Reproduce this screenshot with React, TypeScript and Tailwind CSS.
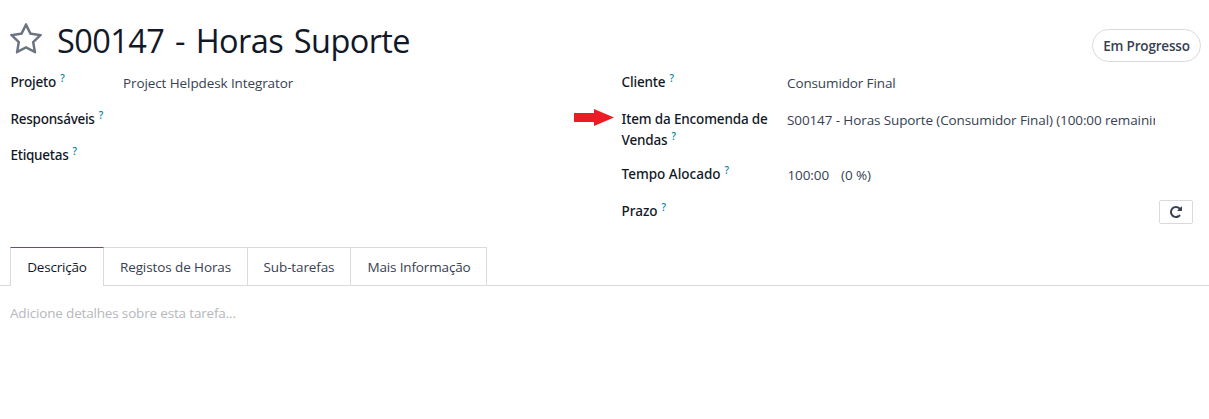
import type { ReactNode } from "react";

function Label({ children, className = "" }: { children: ReactNode; className?: string }) {
  return (
    <div className={`pl-[0.5px] text-[13.5px] font-medium leading-[21px] text-[#111827] font-['Noto_Sans',sans-serif] ${className}`}>
      {children}
      <sup className="relative -top-[5px] ml-1 align-baseline text-[10px] leading-none tracking-normal text-[#017e9c]">?</sup>
    </div>
  );
}

function Value({ children, className = "" }: { children: ReactNode; className?: string }) {
  return (
    <div className={`overflow-hidden pt-px leading-[21px] whitespace-nowrap text-[#374151] ${className}`}>{children}</div>
  );
}

function StarIcon() {
  return (
    <svg className="mt-[23px] h-[30.5px] w-8 shrink-0" viewBox="0 32 1664 1587" preserveAspectRatio="none" fill="#6b7280">
      <path d="M1137 1004l306-297-422-62-189-382-189 382-422 62 306 297-73 421 378-199 377 199zM1664 647q0 22-26 48l-363 354 86 500q1 7 1 20 0 50-41 50-19 0-40-12l-449-236-449 236q-22 12-40 12-21 0-31.5-14.5t-10.5-35.5q0-6 2-20l86-500-364-354q-25-27-25-48 0-37 56-46l502-73 225-455q19-41 49-41t49 41l225 455 502 73q56 9 56 46z" />
    </svg>
  );
}

function RepeatIcon() {
  return (
    <svg className="size-3" viewBox="0 0 1536 1536" fill="#374151">
      <path d="M1536 128v448q0 26-19 45t-45 19h-448q-42 0-59-40-17-39 14-69l138-138q-148-137-349-137-104 0-198.500 40.500t-163.500 109.500-109.500 163.500-40.500 198.500 40.500 198.500 109.500 163.500 163.500 109.500 198.500 40.500q119 0 225-52t179-147q7-10 23-12 15 0 25 9l137 138q9 8 9.500 20.500t-7.500 22.500q-109 132-264 204.500t-327 72.500q-156 0-298-61t-245-164-164-245-61-298 61-298 164-245 245-164 298-61q147 0 284.500 55.500t244.500 156.500l130-129q29-31 70-14 39 17 39 59z" />
    </svg>
  );
}

export default function App() {
  return (
    <div className="h-[419px] overflow-hidden bg-white text-[13.5px] font-['Open_Sans',sans-serif]">
      <header className="flex h-[72px] pr-2 pl-[10px]">
        <StarIcon />
        <h1 className="mt-[18px] ml-[15px] flex-1 text-[32.5px] leading-[46px] tracking-[-0.6px] text-[#111827] [word-spacing:3px]">
          S00147 - Horas Suporte
        </h1>
        <button className="mt-[29px] flex h-[33px] w-[109px] items-center justify-center rounded-full border border-[#d8dadd] pt-px font-semibold tracking-[-0.18px] text-[#374151]">
          Em Progresso
        </button>
      </header>

      <section className="flex h-[175px] pl-[10px]">
        <div className="grid w-[564px] auto-rows-[36.5px] grid-cols-[113px_1fr] content-start">
          <Label className="tracking-[-0.15px]">Projeto</Label>
          <Value className="tracking-[-0.1px]">Project Helpdesk Integrator</Value>
          <Label className="col-span-2 tracking-[-0.26px]">Responsáveis</Label>
          <Label className="col-span-2 tracking-[-0.27px]">Etiquetas</Label>
        </div>
        <svg className="mt-[37px] h-[17px] w-10 shrink-0" viewBox="0 0 40 17" fill="#ec1c24">
          <path d="M0 4h20V0l20 8.500-20 8.500v-4H0z" />
        </svg>
        <div className="ml-[7px] grid w-[572px] grid-cols-[166px_1fr] grid-rows-[36.500px_55px_36.500px_36.500px] content-start">
          <Label className="tracking-[-0.15px]">Cliente</Label>
          <Value className="tracking-[-0.12px]">Consumidor Final</Value>
          <Label className="tracking-[-0.15px]">
            Item da Encomenda de
            <br />
            Vendas
          </Label>
          <Value className="w-[368px] tracking-[-0.11px]">
            S00147 - Horas Suporte (Consumidor Final) (100:00 remaining)
          </Value>
          <Label className="tracking-[0px]">Tempo Alocado</Label>
          <Value className="flex gap-3 pl-[0.5px] tracking-[-0.1px]">
            <span>100:00</span>
            <span>(0 %)</span>
          </Value>
          <Label className="pt-px">Prazo</Label>
          <button className="flex h-6 w-[34px] items-center justify-center justify-self-end rounded-[2px] border border-[#d8dadd]">
            <RepeatIcon />
          </button>
        </div>
      </section>

      <nav className="flex h-[39px] text-[#374151]">
        <div className="w-[10px] border-b border-[#d8dadd]" />
        <button className="w-[94px] border-x border-t border-x-[#d8dadd] border-t-[#714b67] tracking-[-0.2px] text-[#111827]">Descrição</button>
        <button className="w-36 border-t border-r border-b border-[#d8dadd] pt-0.5 tracking-[-0.1px]">Registos de Horas</button>
        <button className="w-[103px] border-t border-r border-b border-[#d8dadd] pt-0.5 tracking-[-0.12px]">Sub-tarefas</button>
        <button className="w-[136px] border-t border-r border-b border-[#d8dadd] pt-0.5 pl-px tracking-[-0.14px]">Mais Informação</button>
        <div className="flex-1 border-b border-[#d8dadd]" />
      </nav>
      <p className="mt-[17px] pl-[10px] leading-[21px] tracking-[-0.17px] text-[#b5b8bd]">
        Adicione detalhes sobre esta tarefa...
      </p>
    </div>
  );
}
